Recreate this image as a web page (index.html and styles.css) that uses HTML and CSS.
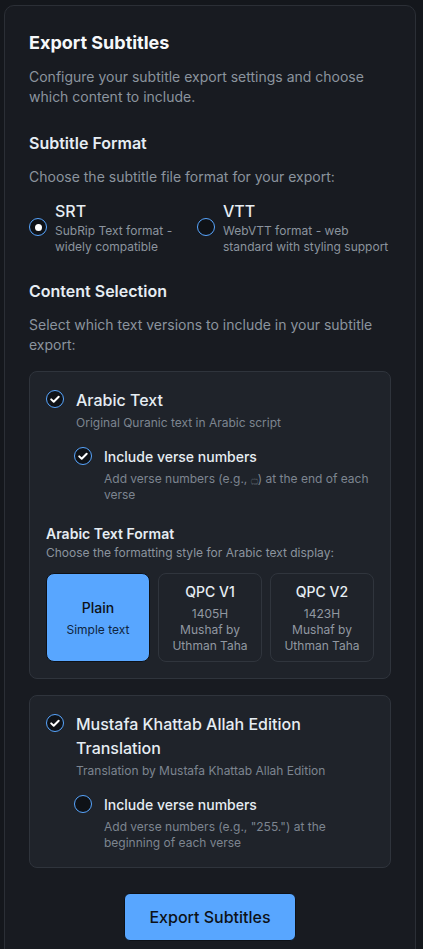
FILE: index.html
```html
<!DOCTYPE html>
<html lang="en">
<head>
<meta charset="utf-8">
<title>Export Subtitles</title>
<link rel="stylesheet" href="styles.css">
</head>
<body>
<div class="card">
  <h1 class="title">Export Subtitles</h1>
  <p class="lead">Configure your subtitle export settings and choose which content to include.</p>

  <section class="section">
    <h2 class="section-title">Subtitle Format</h2>
    <p class="section-desc">Choose the subtitle file format for your export:</p>
    <div class="format-options">
      <label class="radio-opt">
        <span class="radio checked"></span>
        <span class="opt-text">
          <span class="opt-name">SRT</span>
          <span class="opt-desc">SubRip Text format - widely compatible</span>
        </span>
      </label>
      <label class="radio-opt">
        <span class="radio"></span>
        <span class="opt-text">
          <span class="opt-name">VTT</span>
          <span class="opt-desc">WebVTT format - web standard with styling support</span>
        </span>
      </label>
    </div>
  </section>

  <section class="section">
    <h2 class="section-title">Content Selection</h2>
    <p class="section-desc">Select which text versions to include in your subtitle export:</p>

    <div class="box">
      <div class="check-row">
        <span class="check on"><svg viewBox="0 0 18 18" width="18" height="18"><path d="M5.2 9.4l2.5 2.4 5-5" fill="none" stroke="#fff" stroke-width="2" stroke-linecap="round" stroke-linejoin="round"/></svg></span>
        <div class="item-text">
          <div class="item-title">Arabic Text</div>
          <div class="item-sub">Original Quranic text in Arabic script</div>
        </div>
      </div>
      <div class="check-row nested">
        <span class="check on"><svg viewBox="0 0 18 18" width="18" height="18"><path d="M5.2 9.4l2.5 2.4 5-5" fill="none" stroke="#fff" stroke-width="2" stroke-linecap="round" stroke-linejoin="round"/></svg></span>
        <div class="item-text">
          <div class="item-title">Include verse numbers</div>
          <div class="item-sub">Add verse numbers (e.g., &#x06DD;) at the end of each verse</div>
        </div>
      </div>

      <div class="fmt">
        <div class="fmt-title">Arabic Text Format</div>
        <div class="fmt-desc">Choose the formatting style for Arabic text display:</div>
        <div class="fmt-grid">
          <div class="fmt-btn active">
            <span class="fmt-name">Plain</span>
            <span class="fmt-line">Simple text</span>
          </div>
          <div class="fmt-btn">
            <span class="fmt-name">QPC V1</span>
            <span class="fmt-line">1405H</span>
            <span class="fmt-line">Mushaf by Uthman Taha</span>
          </div>
          <div class="fmt-btn">
            <span class="fmt-name">QPC V2</span>
            <span class="fmt-line">1423H</span>
            <span class="fmt-line">Mushaf by Uthman Taha</span>
          </div>
        </div>
      </div>
    </div>

    <div class="box">
      <div class="check-row">
        <span class="check on"><svg viewBox="0 0 18 18" width="18" height="18"><path d="M5.2 9.4l2.5 2.4 5-5" fill="none" stroke="#fff" stroke-width="2" stroke-linecap="round" stroke-linejoin="round"/></svg></span>
        <div class="item-text">
          <div class="item-title">Mustafa Khattab Allah Edition Translation</div>
          <div class="item-sub">Translation by Mustafa Khattab Allah Edition</div>
        </div>
      </div>
      <div class="check-row nested">
        <span class="check"></span>
        <div class="item-text">
          <div class="item-title">Include verse numbers</div>
          <div class="item-sub">Add verse numbers (e.g., "255.") at the beginning of each verse</div>
        </div>
      </div>
    </div>
  </section>

  <div class="actions">
    <button class="export" type="button">Export Subtitles</button>
  </div>
</div>
</body>
</html>
```

FILE: styles.css
```css
html, body {
  margin: 0;
  padding: 0;
  background: #14171c;
}

body {
  font-family: Inter, "Noto Sans", "DejaVu Sans", sans-serif;
  color: #e6edf3;
}

.card {
  margin: 5px 7px 0 4px;
  border: 1px solid #2b2f36;
  border-radius: 10px;
  background: #181b21;
  padding: 23px 24px 24px;
}

.title {
  margin: 0;
  font-size: 18px;
  line-height: 28px;
  font-weight: 700;
  color: #f6f8fa;
}

.lead {
  margin: 10px 0 0;
  font-size: 14px;
  line-height: 20px;
  color: #8b949e;
}

.section {
  margin-top: 24px;
}

.section-title {
  margin: 0;
  font-size: 16px;
  line-height: 24px;
  font-weight: 600;
  color: #e6edf3;
}

.section-desc {
  margin: 12px 0 0;
  font-size: 14px;
  line-height: 20px;
  color: #8b949e;
}

.format-options {
  display: grid;
  grid-template-columns: 150px 1fr;
  column-gap: 18px;
  margin-top: 12px;
}

.radio-opt {
  display: flex;
  align-items: center;
  gap: 8px;
}

.radio {
  box-sizing: border-box;
  flex: none;
  width: 18px;
  height: 18px;
  border-radius: 50%;
  border: 1.5px solid #58a6ff;
  background: #0f1217;
  display: flex;
  align-items: center;
  justify-content: center;
}

.radio.checked::after {
  content: "";
  width: 7px;
  height: 7px;
  border-radius: 50%;
  background: #ffffff;
}

.opt-text {
  display: block;
}

.opt-name {
  display: block;
  font-size: 16px;
  line-height: 24px;
  font-weight: 500;
  color: #e6edf3;
}

.opt-desc {
  display: block;
  font-size: 12px;
  line-height: 16px;
  color: #8b949e;
}

.box {
  margin-top: 16px;
  border: 1px solid #2f343c;
  border-radius: 8px;
  background: #1f232a;
  padding: 16px;
}

.check-row {
  display: flex;
  align-items: flex-start;
  gap: 12px;
}

.check {
  box-sizing: border-box;
  flex: none;
  width: 18px;
  height: 18px;
  margin-top: 2px;
  border-radius: 50%;
  border: 1.5px solid #58a6ff;
  background: #0f1217;
  display: flex;
  align-items: center;
  justify-content: center;
  overflow: hidden;
}

.check svg {
  flex: none;
  display: block;
}

.item-title {
  font-size: 16px;
  line-height: 24px;
  font-weight: 500;
  color: #e6edf3;
}

.item-sub {
  margin-top: 3px;
  font-size: 12px;
  line-height: 16px;
  color: #7d8590;
}

.nested {
  margin: 16px 0 0 28px;
}

.nested .check {
  margin-top: 0;
}

.nested .item-title {
  font-size: 14px;
  line-height: 20px;
}

.nested .item-sub {
  margin-top: 4px;
}

.fmt {
  margin-top: 21px;
}

.fmt-title {
  font-size: 14px;
  line-height: 20px;
  font-weight: 600;
  color: #e6edf3;
}

.fmt-desc {
  margin-top: 1px;
  font-size: 12px;
  line-height: 16px;
  color: #8b949e;
}

.fmt-grid {
  display: grid;
  grid-template-columns: repeat(3, 1fr);
  gap: 8px;
  margin-top: 12px;
}

.fmt-btn {
  border: 1px solid #30353d;
  border-radius: 8px;
  padding: 8px 4px 7px;
  display: flex;
  flex-direction: column;
  align-items: center;
  justify-content: center;
  text-align: center;
  color: #9198a1;
}

.fmt-btn.active {
  background: #58a6ff;
  border-color: #0d1117;
  color: #0d1117;
}

.fmt-name {
  display: block;
  margin-bottom: 4px;
  font-size: 14px;
  line-height: 20px;
  font-weight: 500;
  color: #e6edf3;
}

.fmt-btn.active .fmt-name {
  color: #0d1117;
}

.fmt-line {
  display: block;
  font-size: 12px;
  line-height: 16px;
}

.fmt-btn.active .fmt-line {
  color: #0f2540;
}

.actions {
  margin-top: 25px;
  display: flex;
  justify-content: center;
}

.export {
  font-family: Inter, "Noto Sans", "DejaVu Sans", sans-serif;
  font-size: 16px;
  line-height: 24px;
  font-weight: 500;
  padding: 11px 24px;
  border: 1px solid #0d1117;
  border-radius: 6px;
  background: #58a6ff;
  color: #0d1117;
  cursor: pointer;
}
```
